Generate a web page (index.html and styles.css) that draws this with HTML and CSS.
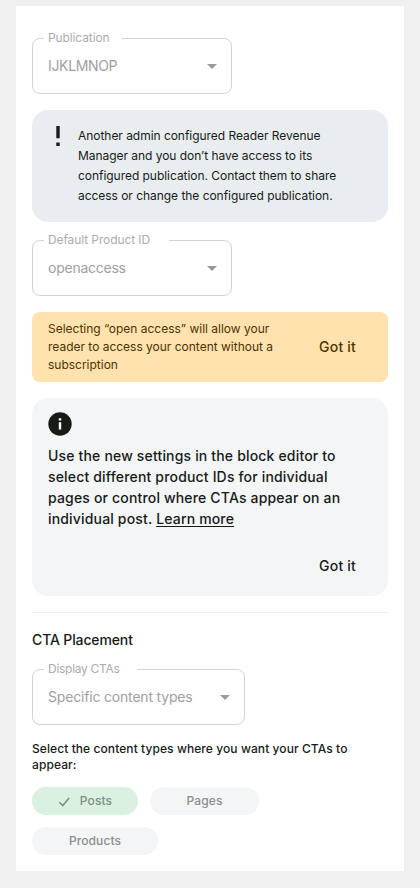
FILE: index.html
```html
<!DOCTYPE html>
<html lang="en">
<head>
<meta charset="utf-8">
<title>Reader Revenue Manager settings</title>
<link rel="stylesheet" href="styles.css">
</head>
<body>
<main class="panel">
  <div class="select">
    <span class="select-label label-publication">Publication</span>
    <span class="select-value value-publication">IJKLMNOP</span>
    <svg class="arrow" width="10" height="5" viewBox="0 0 10 5"><path d="M0 0h10L5 5z"/></svg>
  </div>

  <section class="notice notice-warning">
    <svg class="bang" width="4" height="20" viewBox="0 0 4 20"><path d="M.3 0h3.4v12.2H.3zM.3 16.6h3.4V20H.3z"/></svg>
    <p>Another admin configured Reader Revenue<br>Manager and you don’t have access to its<br>configured publication. Contact them to share<br>access or change the configured publication.</p>
  </section>

  <div class="select select-product">
    <span class="select-label label-product">Default Product ID</span>
    <span class="select-value value-product">openaccess</span>
    <svg class="arrow" width="10" height="5" viewBox="0 0 10 5"><path d="M0 0h10L5 5z"/></svg>
  </div>

  <section class="notice notice-access">
    <p>Selecting “open access” will allow your<br>reader to access your content without a<br>subscription</p>
    <button class="dismiss">Got it</button>
  </section>

  <section class="notice notice-info">
    <svg class="info" width="24" height="24" viewBox="0 0 24 24"><circle cx="12" cy="12" r="11.7" fill="#161b18"/><path d="M10.8 6.2h2.4v2.2h-2.4zM10.8 10.2h2.4v7.4h-2.4z" fill="#fff"/></svg>
    <p>Use the new settings in the block editor to<br>select different product IDs for individual<br>pages or control where CTAs appear on an<br>individual post. <a href="#">Learn more</a></p>
    <button class="dismiss">Got it</button>
  </section>

  <section class="placement">
    <h2>CTA Placement</h2>
    <div class="select select-display">
      <span class="select-label label-display">Display CTAs</span>
      <span class="select-value value-display">Specific content types</span>
      <svg class="arrow" width="10" height="5" viewBox="0 0 10 5"><path d="M0 0h10L5 5z"/></svg>
    </div>
    <p class="hint">Select the content types where you want your CTAs to<br>appear:</p>
    <div class="chips">
      <button class="chip chip-selected"><svg width="12" height="10" viewBox="0 0 12 10"><path d="M1.5 5.2 4.8 8.6 11.1 1" fill="none" stroke="currentColor" stroke-width="1.5"/></svg>Posts</button>
      <button class="chip chip-pages">Pages</button>
      <button class="chip chip-products">Products</button>
    </div>
  </section>
</main>
</body>
</html>
```
FILE: styles.css
```css
* { box-sizing: border-box; }
body {
  margin: 0;
  padding: 6px 16px 0;
  background: #f0f0f0;
  color: #161b18;
  font-family: Inter, "Liberation Sans", sans-serif;
}
p, h2 { margin: 0; }
button {
  padding: 0;
  border: 0;
  background: none;
  font-family: inherit;
}
.panel {
  height: 865px;
  padding: 32px 16px 0;
  background: #fff;
  box-shadow: 0 1px 0 #ebebeb;
}
.select {
  position: relative;
  display: flex;
  align-items: center;
  justify-content: space-between;
  width: 200px;
  height: 56px;
  padding: 0 14px 0 15px;
  border: 1px solid #d3d3d3;
  border-radius: 8px;
  color: #a0a0a0;
}
.select-label {
  position: absolute;
  top: -9px;
  left: 11px;
  padding-left: 4px;
  background: #fff;
  color: #acacac;
  font-size: 12px;
  line-height: 16px;
  white-space: nowrap;
}
.label-publication { width: 78px; letter-spacing: -.11px; }
.label-product { width: 125px; letter-spacing: -.1px; }
.label-display { width: 93px; letter-spacing: -.28px; }
.select-value { font-size: 14px; line-height: 20px; }
.value-publication { letter-spacing: -.34px; }
.value-product { letter-spacing: -.25px; }
.value-display { letter-spacing: -.18px; }
.arrow { display: block; fill: #999; }

.notice { display: flex; }
.notice-warning {
  height: 112px;
  margin-top: 16px;
  padding: 16px 16px 0 24px;
  gap: 18px;
  border-radius: 16px;
  background: #e9edf0;
  font-size: 12px;
  line-height: 20px;
  letter-spacing: -.04px;
}
.bang { flex: none; fill: #161b18; }
.select-product { margin-top: 18px; }
.notice-access {
  height: 70px;
  margin-top: 16px;
  padding: 8px 32px 8px 16px;
  align-items: center;
  justify-content: space-between;
  border-radius: 8px;
  background: #ffe2ae;
  color: #4e3300;
  font-size: 12px;
  line-height: 18px;
  letter-spacing: -.01px;
}
.dismiss {
  color: inherit;
  font-size: 14px;
  font-weight: 460;
  line-height: 20px;
  letter-spacing: .2px;
}
.notice-info {
  flex-direction: column;
  height: 198px;
  margin-top: 16px;
  padding: 14px 32px 0 16px;
  border-radius: 16px;
  background: #f3f5f7;
  font-size: 14px;
  font-weight: 460;
  line-height: 21px;
  letter-spacing: .17px;
}
.notice-info p { margin-top: 9px; }
.notice-info a {
  color: inherit;
  text-decoration: underline;
  text-underline-offset: 2px;
}
.notice-info .dismiss { align-self: flex-end; margin-top: 27px; }

.placement {
  margin-top: 16px;
  border-top: 1px solid #ebeef0;
}
.placement h2 {
  margin-top: 17px;
  font-size: 14px;
  font-weight: 500;
  line-height: 20px;
  letter-spacing: -.13px;
}
.select-display { width: 213px; margin-top: 19px; }
.hint {
  margin-top: 16px;
  font-size: 12px;
  font-weight: 500;
  line-height: 16px;
  letter-spacing: .08px;
}
.chips {
  display: flex;
  flex-wrap: wrap;
  gap: 12px;
  margin-top: 14px;
}
.chip {
  display: flex;
  align-items: center;
  justify-content: center;
  width: 109px;
  height: 28px;
  padding-bottom: 1px;
  border-radius: 14px;
  background: #f3f5f7;
  color: #8b8d8c;
  font-size: 12px;
  font-weight: 500;
  line-height: 15px;
  letter-spacing: .1px;
}
.chip-selected {
  width: 106px;
  gap: 10px;
  background: #daf1e1;
  color: #7f8c83;
}
.chip-selected svg { margin-top: 2px; }
.chip-products { width: 126px; }
```
